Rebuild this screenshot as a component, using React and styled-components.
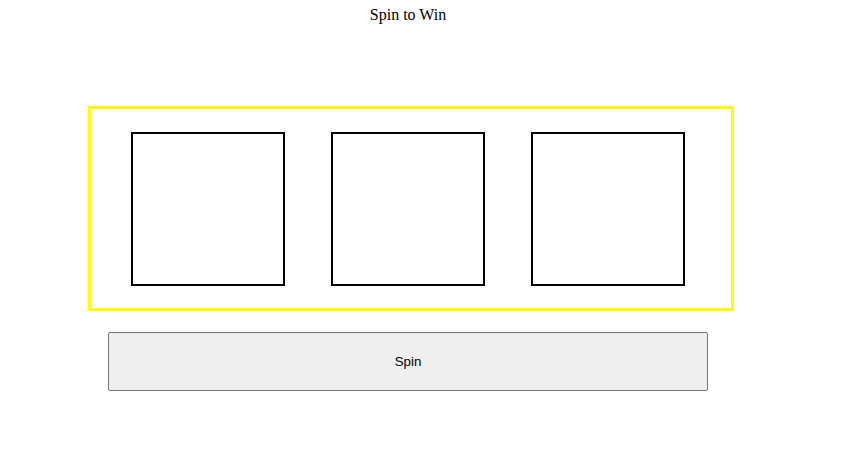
import styled, { createGlobalStyle } from "styled-components";

const GlobalStyle = createGlobalStyle`
  body {
    margin: 8px;
    background: #fff;
    font-family: "Liberation Serif", "Times New Roman", serif;
    font-size: 16px;
    color: #000;
  }
`;

const Page = styled.div`
  width: 800px;
  display: flex;
  flex-direction: column;
  align-items: flex-start;
`;

const Title = styled.div`
  width: 100%;
  text-align: center;
  line-height: 14px;
  margin-bottom: 84px;
`;

const Machine = styled.div`
  display: flex;
  gap: 46px;
  margin-left: 80px;
  padding: 23px 46px 22px 40px;
  border: 3px solid #ffff00;
`;

const Reel = styled.div`
  width: 150px;
  height: 150px;
  border: 2px solid #000;
`;

const SpinButton = styled.button`
  margin: 21px 0 0 100px;
  width: 600px;
  height: 59px;
  background: #efefef;
  border: 1px solid #767676;
  border-radius: 2px;
  font-family: "Liberation Sans", Arial, sans-serif;
  font-size: 13.33px;
  color: #000;
  cursor: pointer;
`;

export default function App() {
  const reels = [1, 2, 3];

  return (
    <>
      <GlobalStyle />
      <Page>
        <Title>Spin to Win</Title>
        <Machine>
          {reels.map((r) => (
            <Reel key={r} />
          ))}
        </Machine>
        <SpinButton>Spin</SpinButton>
      </Page>
    </>
  );
}
